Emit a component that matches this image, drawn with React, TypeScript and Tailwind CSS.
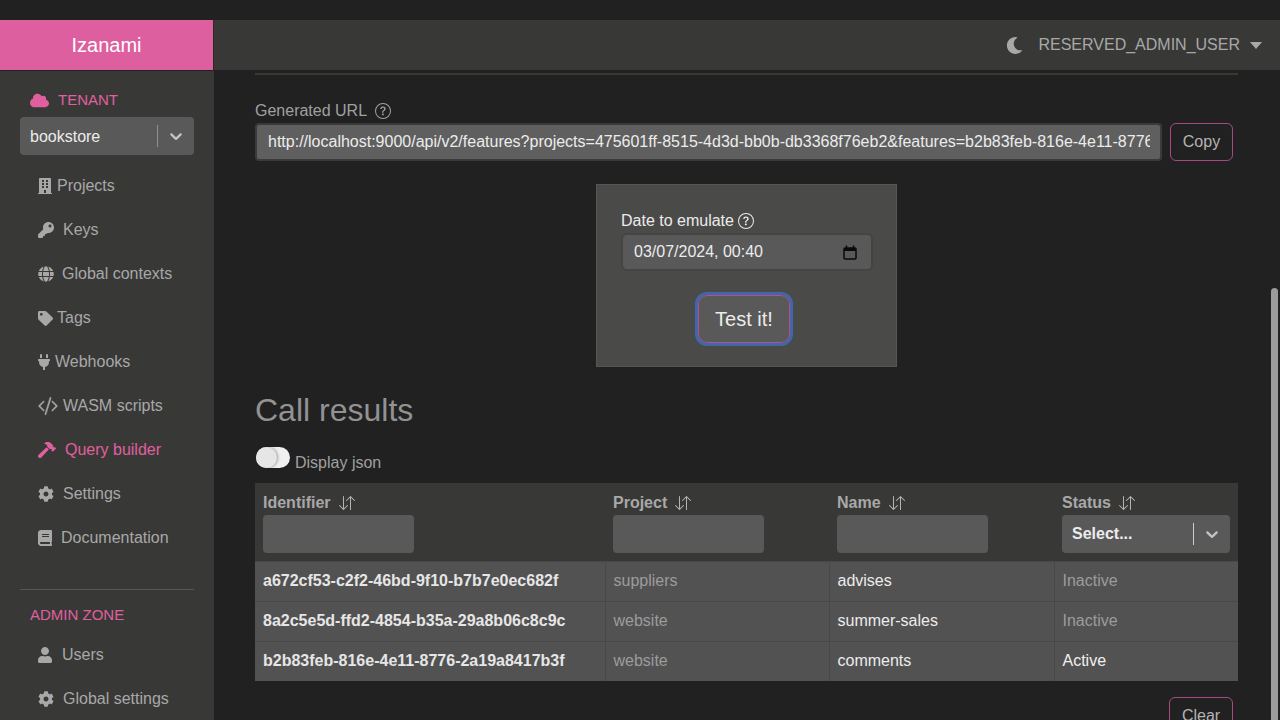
import React from "react";
import { FaCloud, FaBuilding, FaKey, FaGlobe, FaTag, FaPlug, FaHammer, FaCog, FaBook, FaUser, FaMoon } from "react-icons/fa";
import { BsQuestionCircle, BsArrowDownUp, BsCodeSlash } from "react-icons/bs";

const url = "http://localhost:9000/api/v2/features?projects=475601ff-8515-4d3d-bb0b-db3368f76eb2&features=b2b83feb-816e-4e11-8776-2a19a8417b3f";

function NavItem({ icon, label, slot, active }: { icon: React.ReactNode; label: string; slot: string; active?: boolean }) {
  return (
    <div className={`flex items-center h-[44px] pl-[38px] text-[16px] ${active ? "text-[#e0609f]" : "text-[#a8a8a8]"}`}>
      <span className={`flex items-center ${slot}`}>{icon}</span>
      <span>{label}</span>
    </div>
  );
}

function SelectBox({ text, bold }: { text: string; bold?: boolean }) {
  return (
    <div className="flex items-center h-[38px] rounded-[4px] bg-[#595959] pl-[10px]">
      <span className={`flex-1 text-[16px] text-[#ececec] ${bold ? "font-bold" : "pt-px"}`}>{text}</span>
      <span className={bold ? "w-px h-[22px] bg-[#cccccc]" : "w-[1.5px] h-[22px] bg-[#8f8f8f]"} />
      <span className="flex items-center justify-center w-[36px] text-[#c4c4c4]">
        <svg width="20" height="20" viewBox="0 0 20 20" fill="currentColor">
          <path d="M4.516 7.548c0.436-0.446 1.043-0.481 1.576 0l3.908 3.747 3.908-3.747c0.533-0.481 1.141-0.446 1.574 0 0.436 0.445 0.408 1.197 0 1.615-0.406 0.418-4.695 4.502-4.695 4.502-0.217 0.223-0.502 0.335-0.787 0.335s-0.57-0.112-0.789-0.335c0 0-4.287-4.084-4.695-4.502s-0.436-1.17 0-1.615z" />
        </svg>
      </span>
    </div>
  );
}

function Th({ label, children, w }: { label: string; children: React.ReactNode; w: string }) {
  return (
    <th className={`${w} h-[78px] px-[8px] align-top text-left font-normal`}>
      <div className="flex items-center h-[31px] pt-[9px] text-[16px] font-bold text-[#a8a8a8]">
        <span>{label}</span>
        <BsArrowDownUp size={16} className="ml-[8px] text-[#b4b4b4]" />
      </div>
      {children}
    </th>
  );
}

function FilterInput() {
  return <input aria-label="filter" className="block w-[151px] h-[38px] mt-[1px] rounded-[4px] bg-[#595959] outline-none" />;
}

const rows = [
  ["a672cf53-c2f2-46bd-9f10-b7b7e0ec682f", "suppliers", "advises", "Inactive"],
  ["8a2c5e5d-ffd2-4854-b35a-29a8b06c8c9c", "website", "summer-sales", "Inactive"],
  ["b2b83feb-816e-4e11-8776-2a19a8417b3f", "website", "comments", "Active"],
];

export default function App() {
  return (
    <div className="relative h-[720px] overflow-hidden bg-[#212121] pt-[20px] font-['Liberation_Sans',Arial,sans-serif]">
      <header className="flex h-[50px] bg-[#383837]">
        <div className="flex items-center justify-center w-[213px] bg-[#de5f9f] text-[20px] text-white">Izanami</div>
        <div className="w-px bg-[#2a2a2a]" />
        <div className="flex flex-1 items-center justify-end pr-[18px] text-[16px] text-[#a8a8a8]">
          <FaMoon size={17} className="mr-[15px]" />
          <span>RESERVED_ADMIN_USER</span>
          <svg width="12" height="7" viewBox="0 0 12 7" className="ml-[10px]"><path d="M0 0h12L6 7z" fill="#a8a8a8" /></svg>
        </div>
      </header>
      <div className="flex h-[650px]">
        <aside className="w-[214px] shrink-0 mt-px bg-[#383837] px-0">
          <div className="flex items-center h-[24px] mt-[17px] pl-[30px] text-[15px] text-[#e0609f]">
            <FaCloud size={19} className="mr-[9px]" />
            <span>TENANT</span>
          </div>
          <div className="mx-[20px] mt-[5px] mb-[9px]">
            <SelectBox text="bookstore" />
          </div>
          <nav>
            <NavItem icon={<FaBuilding size={16} className="-ml-px" />} label="Projects" slot="w-[19px]" />
            <NavItem icon={<FaKey size={16} />} label="Keys" slot="w-[25px]" />
            <NavItem icon={<FaGlobe size={16} />} label="Global contexts" slot="w-[24px]" />
            <NavItem icon={<FaTag size={15} />} label="Tags" slot="w-[19px]" />
            <NavItem icon={<FaPlug size={16} className="-ml-[2px]" />} label="Webhooks" slot="w-[17px]" />
            <NavItem icon={<BsCodeSlash size={20} strokeWidth={0.4} />} label="WASM scripts" slot="w-[25px]" />
            <NavItem icon={<FaHammer size={18} />} label="Query builder" slot="w-[27px]" active />
            <NavItem icon={<FaCog size={16} />} label="Settings" slot="w-[25px]" />
            <NavItem icon={<FaBook size={16} className="-ml-px" />} label="Documentation" slot="w-[23px]" />
          </nav>
          <div className="mx-[20px] mt-[29px] h-px bg-[#555]" />
          <div className="flex items-center h-[24px] mt-[13px] mb-[6px] pl-[30px] text-[15px] text-[#e0609f]">ADMIN ZONE</div>
          <NavItem icon={<FaUser size={16} className="-ml-px" />} label="Users" slot="w-[24px]" />
          <NavItem icon={<FaCog size={16} />} label="Global settings" slot="w-[25px]" />
        </aside>
        <main className="flex-1 min-w-0 pl-[41px] pr-[42px] text-[16px]">
          <div className="mt-[3px] h-[2px] bg-[#383837]" />
          <div className="flex items-center h-[24px] mt-[24px] text-[#a0a0a0]">
            <span>Generated URL</span>
            <BsQuestionCircle size={16} className="ml-[8px]" />
          </div>
          <div className="flex items-center">
            <input
              readOnly
              value={url}
              className="w-[907px] h-[38px] rounded-[4px] border-2 border-[#3a3a3a] bg-[#5f5f5f] pl-[11px] pr-[10px] text-[16px] text-[#ececec] outline-none"
            />
            <button className="ml-[8px] w-[63px] h-[38px] rounded-[6px] border border-[#a84a80] text-[#b4b4b4]">Copy</button>
          </div>
          <div className="flex justify-center mt-[23px]">
            <div className="w-[301px] h-[183px] border border-[#565656] bg-[#4a4a49] pl-[24px] pr-[23px] pt-[24px]">
              <div className="flex items-center h-[24px] text-[#ececec]">
                <span>Date to emulate</span>
                <BsQuestionCircle size={16} className="ml-[4px]" />
              </div>
              <div className="flex items-center justify-between h-[38px] rounded-[6px] border-2 border-[#444] bg-[#595959] pl-[11px] pr-[14px] text-[#ececec]">
                <span>03/07/2024, 00:40</span>
                <svg width="14" height="15" viewBox="0 0 14 15" fill="none" stroke="#0a0a0a">
                  <rect x="1" y="3" width="12" height="11" rx="1" strokeWidth="1.5" />
                  <path d="M1 4.5h12" strokeWidth="3" />
                  <path d="M3.5 0.5v3M10.5 0.5v3" strokeWidth="1.5" />
                </svg>
              </div>
              <div className="flex justify-center mt-[24px] pr-[6px]">
                <button className="w-[92px] h-[48px] rounded-[9px] border border-[#b5528c] bg-[#595959] text-[20px] text-[#ececec] outline-[3px] outline-[#4067ac]">
                  Test it!
                </button>
              </div>
            </div>
          </div>
          <h2 className="mt-[23px] h-[40px] text-[32px] leading-[40px] text-[#929292]">Call results</h2>
          <div className="flex items-start h-[37px] mt-[16px]">
            <div className="relative w-[34px] h-[21px] mt-[1px] ml-px rounded-full bg-[#f0f0f0]">
              <div className="w-[21px] h-[21px] rounded-full bg-[#e6e6e6] shadow-[1px_0_3px_rgba(0,0,0,0.35)]" />
            </div>
            <span className="ml-[5px] mt-[5px] text-[#a0a0a0]">Display json</span>
          </div>
          <table className="w-[983px] table-fixed border-collapse">
            <thead className="bg-[#383837]">
              <tr>
                <Th label="Identifier" w="w-[350px]"><FilterInput /></Th>
                <Th label="Project" w="w-[224px]"><FilterInput /></Th>
                <Th label="Name" w="w-[225px]"><FilterInput /></Th>
                <Th label="Status" w="w-[184px]"><div className="mt-[1px]"><SelectBox text="Select..." bold /></div></Th>
              </tr>
            </thead>
            <tbody className="bg-[#525252]">
              {rows.map((r) => (
                <tr key={r[0]} className="h-[40px] border-t border-[#484848]">
                  <td className="px-[8px] font-bold text-[#e6e6e6]">{r[0]}</td>
                  <td className="px-[8px] border-l border-[#484848] text-[#9c9c9c]">{r[1]}</td>
                  <td className="px-[8px] border-l border-[#484848] text-[#ececec]">{r[2]}</td>
                  <td className={`px-[8px] border-l border-[#484848] ${r[3] === "Active" ? "text-[#f0f0f0]" : "text-[#9c9c9c]"}`}>{r[3]}</td>
                </tr>
              ))}
            </tbody>
          </table>
          <div className="flex justify-end mt-[16px] pr-[5px]">
            <button className="w-[64px] h-[38px] rounded-[6px] border border-[#a84a80] text-[#b4b4b4]">Clear</button>
          </div>
        </main>
      </div>
      <div className="absolute right-[2px] top-[288px] bottom-0 w-[7px] rounded-t-full bg-[#9b9b9b]" />
    </div>
  );
}
